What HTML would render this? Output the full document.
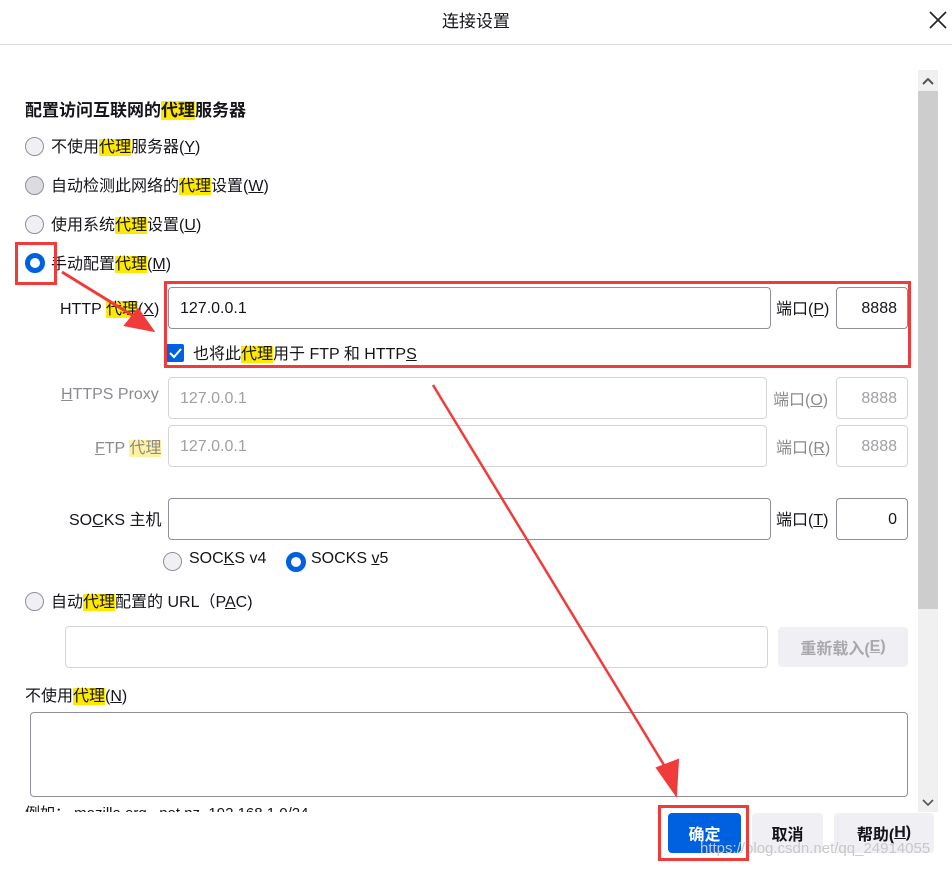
<!DOCTYPE html><html><head><meta charset="utf-8"><style>
body{margin:0;width:952px;height:870px;background:#fff;position:relative;overflow:hidden;font-family:"Liberation Sans","Noto Sans CJK SC",sans-serif;font-size:16px;color:#15141a}
.a{position:absolute;white-space:nowrap}
.h{background:#ffe900}
.r{position:absolute;width:17px;height:17px;border:1.5px solid #8f8f9d;border-radius:50%;background:#f0f0f4}
.rs{position:absolute;width:10px;height:10px;border:5px solid #0061e0;border-radius:50%;background:#fff}
.in{position:absolute;border:1px solid #8f8f9d;border-radius:4px;background:#fff;box-sizing:border-box;padding-left:11px;display:flex;align-items:center}
.dis{border-color:#d5d5d8;color:#a0a0a5}
.g{color:#8a8a8f}
.btn{position:absolute;border-radius:4px;background:#f0f0f4;font-weight:bold;display:flex;align-items:center;justify-content:center;height:40px;top:813px}
.red{position:absolute;border:3px solid #f03b3b;box-sizing:border-box}
u{text-decoration:underline}
</style></head><body>
<div class="a" style="left:0;width:952px;text-align:center;top:7px;font-size:17px">连接设置</div>
<svg class="a" style="left:928px;top:10px" width="20" height="20"><path d="M2 2L18 18M18 2L2 18" stroke="#222" stroke-width="1.6"/></svg>
<div class="a" style="left:0;top:44px;width:952px;height:1px;background:#d8d8d8"></div>
<div class="a" style="left:918px;top:70px;width:20px;height:742px;background:#f0f0f0"></div>
<div class="a" style="left:918px;top:91px;width:20px;height:518px;background:#cdcdcd"></div>
<svg class="a" style="left:918px;top:72px" width="20" height="18"><path d="M5 12L10 7L15 12" stroke="#555" stroke-width="2" fill="none"/></svg>
<svg class="a" style="left:918px;top:794px" width="20" height="18"><path d="M5 6L10 11L15 6" stroke="#555" stroke-width="1.6" fill="none"/></svg>

<div class="a" style="left:25px;top:96px;font-size:17px;font-weight:bold">配置访问互联网的<span class="h">代理</span>服务器</div>
<div class="r" style="left:25px;top:137px"></div><div class="a" style="left:51px;top:133px">不使用<span class="h">代理</span>服务器(<u>Y</u>)</div>
<div class="r" style="left:25px;top:176px;background:#dcdce0"></div><div class="a" style="left:51px;top:172px">自动检测此网络的<span class="h">代理</span>设置(<u>W</u>)</div>
<div class="r" style="left:25px;top:215px"></div><div class="a" style="left:51px;top:211px">使用系统<span class="h">代理</span>设置(<u>U</u>)</div>
<div class="rs" style="left:25px;top:253px"></div><div class="a" style="left:51px;top:250px">手动配置<span class="h">代理</span>(<u>M</u>)</div>

<div class="a" style="left:60px;top:295px">HTTP <span class="h">代理</span>(<u>X</u>)</div>
<div class="in" style="left:168px;top:287px;width:603px;height:42px;padding-top:2px">127.0.0.1</div>
<div class="a" style="left:776px;top:295px">端口(<u>P</u>)</div>
<div class="in" style="left:836px;top:287px;width:72px;height:42px;justify-content:flex-end;padding-right:10px;padding-top:2px">8888</div>
<div class="a" style="left:166px;top:344px;width:18px;height:18px;background:#0061e0;border-radius:2px"></div>
<svg class="a" style="left:166px;top:344px" width="18" height="18"><path d="M4 9L8 13L15 5" stroke="#fff" stroke-width="2" fill="none"/></svg>
<div class="a" style="left:193px;top:340px">也将此<span class="h">代理</span>用于 FTP 和 HTTP<u>S</u></div>

<div class="a g" style="left:61px;top:386px"><u>H</u>TTPS Proxy</div>
<div class="in dis" style="left:168px;top:377px;width:599px;height:42px;padding-top:2px">127.0.0.1</div>
<div class="a g" style="left:773px;top:386px">端口(<u>O</u>)</div>
<div class="in dis" style="left:836px;top:377px;width:72px;height:42px;justify-content:flex-end;padding-right:10px;padding-top:2px">8888</div>
<div class="a g" style="left:95px;top:434px"><u>F</u>TP <span style="background:#fff3a0">代理</span></div>
<div class="in dis" style="left:168px;top:425px;width:599px;height:42px;padding-top:2px">127.0.0.1</div>
<div class="a g" style="left:776px;top:434px">端口(<u>R</u>)</div>
<div class="in dis" style="left:836px;top:425px;width:72px;height:42px;justify-content:flex-end;padding-right:10px;padding-top:2px">8888</div>

<div class="a" style="left:69px;top:506px">SO<u>C</u>KS 主机</div>
<div class="in" style="left:168px;top:498px;width:603px;height:42px"></div>
<div class="a" style="left:776px;top:506px">端口(<u>T</u>)</div>
<div class="in" style="left:836px;top:498px;width:72px;height:42px;justify-content:flex-end;padding-right:10px;padding-top:2px">0</div>
<div class="r" style="left:163px;top:552px"></div><div class="a" style="left:189px;top:550px">SOC<u>K</u>S v4</div>
<div class="rs" style="left:286px;top:552px"></div><div class="a" style="left:311px;top:550px">SOCKS <u>v</u>5</div>
<div class="r" style="left:25px;top:592px"></div><div class="a" style="left:51px;top:588px">自动<span class="h">代理</span>配置的 URL（P<u>A</u>C)</div>
<div class="in dis" style="left:65px;top:626px;width:703px;height:42px"></div>
<div class="btn" style="left:778px;top:627px;width:130px;color:#a8a8ad">重新载入(<u>E</u>)</div>

<div class="a" style="left:25px;top:682px">不使用<span class="h">代理</span>(<u>N</u>)</div>
<div class="in" style="left:30px;top:712px;width:878px;height:85px"></div>
<div class="a" style="left:25px;top:802px;height:10px;overflow:hidden;font-size:15px">例如：.mozilla.org, .net.nz, 192.168.1.0/24</div>

<div class="btn" style="left:668px;width:73px;background:#0061e0;color:#fff">确定</div>
<div class="btn" style="left:752px;width:71px">取消</div>
<div class="btn" style="left:834px;width:100px">帮助(<u>H</u>)</div>
<div class="a" style="left:700px;top:840px;color:#c8c8c8;font-size:15px">https://blog.csdn.net/qq_24914055</div>

<div class="red" style="left:15px;top:242px;width:42px;height:43px"></div>
<div class="red" style="left:164px;top:281px;width:747px;height:87px"></div>
<div class="red" style="left:658px;top:805px;width:91px;height:56px"></div>
<svg class="a" style="left:0;top:0" width="952" height="870">
<path d="M62 272L140 320" stroke="#f03b3b" stroke-width="3"/><path d="M152 330L126 325L138 310Z" fill="#f03b3b" stroke="#f03b3b" stroke-width="3"/>
<path d="M433 385L667 770" stroke="#f03b3b" stroke-width="2.5"/><path d="M676 795L657 768L678 760Z" fill="#f03b3b" stroke="#f03b3b" stroke-width="2"/>
</svg>
</body></html>
